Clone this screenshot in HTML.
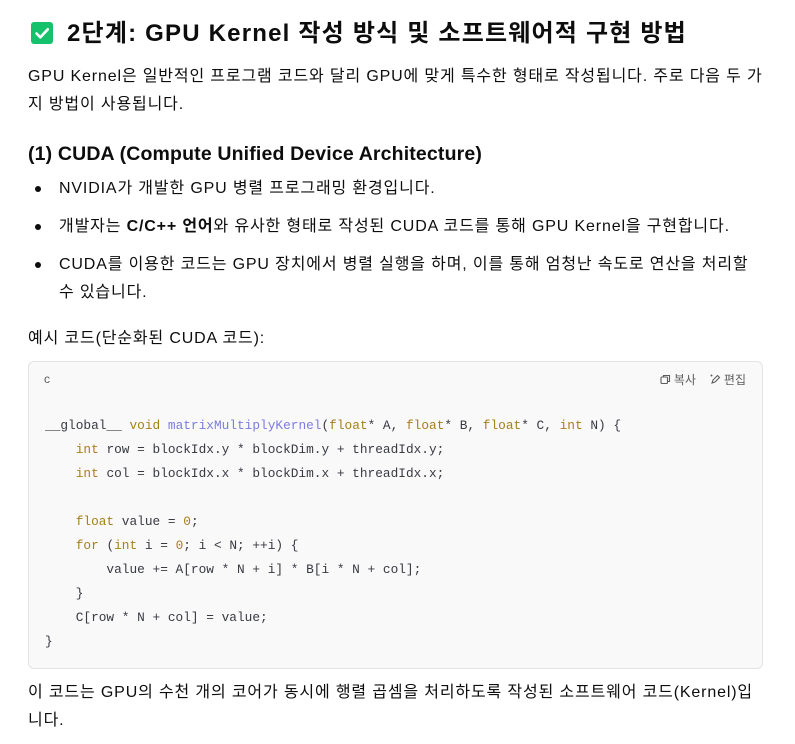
<!DOCTYPE html>
<html><head><meta charset="utf-8">
<style>
html,body{margin:0;padding:0;background:#fff;}
body{width:795px;height:744px;position:relative;overflow:hidden;font-family:"Liberation Sans","Noto Sans CJK KR",sans-serif;color:#0d0d0d;}
.t{position:absolute;left:28px;white-space:nowrap;font-size:16px;letter-spacing:0.85px;line-height:28px;}
h2{position:absolute;left:28px;top:14px;margin:0;font-size:24px;letter-spacing:1.2px;font-weight:700;line-height:40px;white-space:nowrap;}
h3{position:absolute;left:28px;top:139px;margin:0;font-size:19.5px;letter-spacing:0.15px;font-weight:700;line-height:30px;white-space:nowrap;}
.b{position:absolute;left:35px;width:6px;height:6px;border-radius:50%;background:#0d0d0d;}
.code{position:absolute;left:28px;top:361px;width:735px;height:308px;box-sizing:border-box;background:#f9f9f9;border:1px solid #e3e3e3;border-radius:6px;}
.lang{position:absolute;left:15px;top:10px;font-size:12px;color:#5d5d5d;}
.act{position:absolute;right:16px;top:9px;font-size:12px;color:#5d5d5d;display:flex;gap:14px;}
.act span{display:flex;align-items:center;gap:3px;}
pre{position:absolute;left:16px;top:52px;margin:0;font-family:"Liberation Mono",monospace;font-size:12.8px;line-height:24px;color:#383a42;}
.k{color:#a67f1a;}.f{color:#7c7ce0;}.n{color:#a67f1a;}
</style></head><body>
<h2><svg width="22" height="22" viewBox="0 0 22 22" style="vertical-align:-3px;margin-right:14px;margin-left:3px"><rect width="22" height="22" rx="3" fill="#15c26b"/><path d="M5.5 11.5l3.8 3.8 7.5-8" stroke="#fff" stroke-width="2.6" fill="none" stroke-linecap="round" stroke-linejoin="round"/></svg>2단계: GPU Kernel 작성 방식 및 소프트웨어적 구현 방법</h2>
<div class="t" style="top:63px;">GPU Kernel은 일반적인 프로그램 코드와 달리 GPU에 맞게 특수한 형태로 작성됩니다. 주로 다음 두 가</div>
<div class="t" style="top:91px;">지 방법이 사용됩니다.</div>
<h3>(1) CUDA (Compute Unified Device Architecture)</h3>
<div class="b" style="top:186px"></div><div class="t" style="left:59px;top:175px;">NVIDIA가 개발한 GPU 병렬 프로그래밍 환경입니다.</div>
<div class="b" style="top:224px"></div><div class="t" style="left:59px;top:213px;">개발자는 <b>C/C++ 언어</b>와 유사한 형태로 작성된 CUDA 코드를 통해 GPU Kernel을 구현합니다.</div>
<div class="b" style="top:262px"></div><div class="t" style="left:59px;top:251px;">CUDA를 이용한 코드는 GPU 장치에서 병렬 실행을 하며, 이를 통해 엄청난 속도로 연산을 처리할</div>
<div class="t" style="left:59px;top:279px;">수 있습니다.</div>
<div class="t" style="top:325px;">예시 코드(단순화된 CUDA 코드):</div>
<div class="code">
<div class="lang">c</div>
<div class="act"><span><svg width="11" height="11" viewBox="0 0 11 11"><rect x="1" y="3" width="6.5" height="6.5" rx="1" fill="none" stroke="#5d5d5d" stroke-width="1.1"/><path d="M3.5 3V1.5h6v6H7.5" fill="none" stroke="#5d5d5d" stroke-width="1.1"/></svg>복사</span><span><svg width="11" height="11" viewBox="0 0 11 11"><path d="M2 9l1-3 4.5-4.5 2 2L5 8z" fill="none" stroke="#5d5d5d" stroke-width="1.1"/><circle cx="1.5" cy="1.5" r="1" fill="#5d5d5d"/></svg>편집</span></div>
<pre>__global__ <span class="k">void</span> <span class="f">matrixMultiplyKernel</span>(<span class="k">float</span>* A, <span class="k">float</span>* B, <span class="k">float</span>* C, <span class="k">int</span> N) {
    <span class="k">int</span> row = blockIdx.y * blockDim.y + threadIdx.y;
    <span class="k">int</span> col = blockIdx.x * blockDim.x + threadIdx.x;

    <span class="k">float</span> value = <span class="n">0</span>;
    <span class="k">for</span> (<span class="k">int</span> i = <span class="n">0</span>; i &lt; N; ++i) {
        value += A[row * N + i] * B[i * N + col];
    }
    C[row * N + col] = value;
}</pre>
</div>
<div class="t" style="top:679px;">이 코드는 GPU의 수천 개의 코어가 동시에 행렬 곱셈을 처리하도록 작성된 소프트웨어 코드(Kernel)입</div>
<div class="t" style="top:707px;">니다.</div>
</body></html>
